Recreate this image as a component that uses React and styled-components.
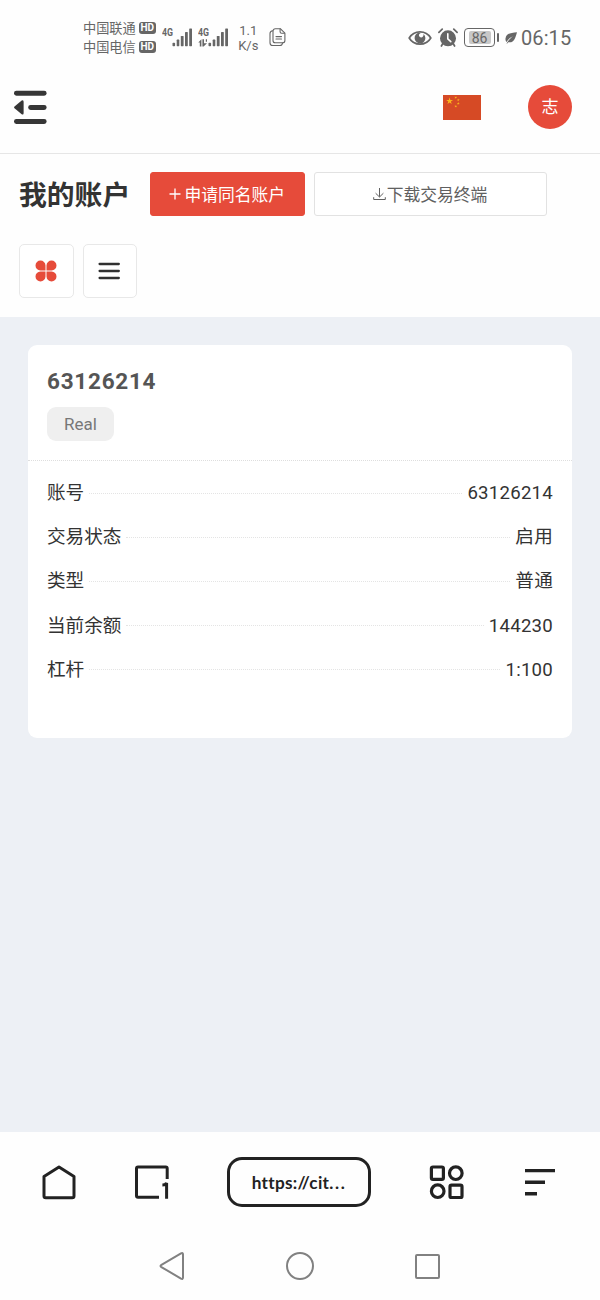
import React from "react";
import styled, { createGlobalStyle } from "styled-components";

const colors = {
  primary: "#e64b3a",
  text: "#333333",
  muted: "#606060",
  status: "#666666",
  page: "#edf0f5",
  line: "#e6e6e6",
  ink: "#222222",
};

const rows = [
  { label: "账号", value: "63126214" },
  { label: "交易状态", value: "启用" },
  { label: "类型", value: "普通" },
  { label: "当前余额", value: "144230" },
  { label: "杠杆", value: "1:100" },
];

const SignalIcon = ({ data }) => (
  <svg width="32" height="24" viewBox="0 0 32 24" fill={colors.status}>
    <text x="0" y="9.6" fontFamily="Roboto" fontSize="11" fontWeight="700" textLength="11" lengthAdjust="spacingAndGlyphs">4G</text>
    {data && <path d="M0.3 16.4L3.4 13.2V20.4H1.8V16.4ZM4.4 13.2H6V17.2H9L5.6 20.4H4.4ZM7.8 13.2h1.2v2.6h-1.2z" />}
    <rect x="10.5" y="16.8" width="2.6" height="3.4" rx="0.8" />
    <rect x="14.7" y="13.6" width="2.6" height="6.6" rx="0.6" />
    <rect x="18.8" y="10" width="2.8" height="10.2" rx="0.6" />
    <rect x="23" y="6" width="2.8" height="14.2" rx="0.6" />
    <rect x="27.2" y="2.4" width="2.8" height="17.8" rx="0.6" />
  </svg>
);

const CopyIcon = () => (
  <svg width="18" height="20" viewBox="0 0 18 20" fill="none" stroke={colors.status} strokeWidth="1.1" strokeLinejoin="round" strokeLinecap="round">
    <path d="M6.3 0.7H11.3L15.9 5.2V12.5a2.3 2.3 0 0 1-2.3 2.3H6.3A2.3 2.3 0 0 1 4 12.5V3A2.3 2.3 0 0 1 6.3 0.7Z" />
    <path d="M11.1 0.9V3.7a1.5 1.5 0 0 0 1.5 1.5h2.8M3.8 2.7C2 2.9 1 3.7 1 5.5v9.2A2.8 2.8 0 0 0 3.8 17.5h7.1c1.4 0 2.3-.8 2.6-2.4M7 8.6h5.5M7 11h5.5" />
  </svg>
);

const EyeIcon = () => (
  <svg width="24" height="18" viewBox="0 0 24 18">
    <path d="M1.2 9C6 0.8 18 0.8 22.8 9C18 17.2 6 17.2 1.2 9Z" fill="none" stroke={colors.status} strokeWidth="1.7" />
    <path d="M10.6 3.8A5.4 5.4 0 1 0 17.4 9 5.6 5.6 0 0 0 15.5 5C16 7.8 13.2 9.4 11.6 7.7 10.3 6.3 11 4.5 12.8 3.9Z" fill={colors.status} />
  </svg>
);

const AlarmIcon = () => (
  <svg width="20" height="20" viewBox="0 0 20 20">
    <circle cx="10" cy="10.3" r="8" fill={colors.status} />
    <path d="M0.9 4.3L4.2 1.2M19.1 4.3L15.8 1.2M4.7 15.8L3.4 18M15.3 15.8L16.6 18" stroke={colors.status} strokeWidth="1.7" strokeLinecap="round" />
    <path d="M9.8 5.8V10.8L12.8 13.6" fill="none" stroke="#fff" strokeWidth="1.6" strokeLinecap="round" />
  </svg>
);

const LeafIcon = () => (
  <svg width="14" height="14" viewBox="0 0 14 14">
    <path d="M13 1.2C7 1.8 2.2 2.2 1.5 7.4 1.3 9 1.8 10.3 2.5 11.1 4.2 8.2 6.3 6.6 9 5.3 6.5 7.1 4.3 9.2 2.4 12.7L3.5 12.2 4.2 11.2C10.3 12.2 11.3 7 13 1.2Z" fill={colors.status} />
  </svg>
);

const FoldIcon = () => (
  <svg width="34" height="34" viewBox="0 0 34 34" fill="#363636">
    <rect x="0" y="0.7" width="32.6" height="5" rx="2.4" />
    <rect x="14.2" y="14.9" width="18.4" height="5" rx="2.4" />
    <rect x="0" y="28.9" width="32.6" height="5" rx="2.4" />
    <path d="M0.5 16.6L7.7 10.6Q9.6 9.4 9.6 11.8V23Q9.6 25.4 7.7 24.2L0.5 18.2Q-0.3 17.4 0.5 16.6Z" />
  </svg>
);

const star = "M0-10L2.25-3.1H9.5L3.64 1.18 5.88 8.1 0 3.8-5.88 8.1-3.64 1.18-9.5-3.1H-2.25Z";

const ChinaFlag = () => (
  <svg width="38" height="26" viewBox="0 0 38 26">
    <rect width="38" height="25" y="1" fill="#d64a25" />
    <g fill="#fbb51c">
      <path d={star} transform="translate(6.6 7.2) scale(.36)" />
      <path d={star} transform="translate(12.7 3.5) rotate(25) scale(.15)" />
      <path d={star} transform="translate(15.3 5.9) rotate(10) scale(.15)" />
      <path d={star} transform="translate(15.3 9.5) scale(.15)" />
      <path d={star} transform="translate(12.7 12.3) rotate(20) scale(.15)" />
    </g>
  </svg>
);

const DownloadIcon = () => (
  <svg width="13" height="14" viewBox="0 0 13 14" fill="none" stroke={colors.muted} strokeWidth="1">
    <path d="M6.5 1V9.8M2.6 6.2L6.5 10L10.4 6.2M0.7 10.2V12.5H12.3V10.2" />
  </svg>
);

const CloverIcon = () => (
  <svg width="22" height="22" viewBox="0 0 22 22" fill={colors.primary}>
    <path d="M10.5 10.5H5.4A5 5 0 1 1 10.5 5.4ZM11.5 10.5V5.4A5 5 0 1 1 16.6 10.5ZM10.5 11.5V16.6A5 5 0 1 1 5.4 11.5ZM11.5 11.5H16.6A5 5 0 1 1 11.5 16.6Z" />
  </svg>
);

const ListIcon = () => (
  <svg width="22" height="18" viewBox="0 0 22 18" stroke="#303030" strokeWidth="2.3" strokeLinecap="round">
    <path d="M1.6 2H20.8M1.6 9H20.8M1.6 16H20.8" />
  </svg>
);

const HomeIcon = () => (
  <svg width="36" height="36" viewBox="0 0 36 36" fill="none" stroke={colors.ink} strokeWidth="3" strokeLinejoin="round">
    <path d="M18 3L33 12.6V32Q33 33.8 31.2 33.8H4.8Q3 33.8 3 32V12.6Z" />
  </svg>
);

const TabsIcon = () => (
  <svg width="36" height="36" viewBox="0 0 36 36" fill="none" stroke={colors.ink} strokeWidth="3">
    <path d="M25 33.3H4Q2.5 33.3 2.5 31.8V4.5Q2.5 3 4 3H31.7Q33.2 3 33.2 4.5V14.9M28.4 21Q31.7 21 32.6 18.9V34.8" />
  </svg>
);

const AppsIcon = () => (
  <svg width="36" height="36" viewBox="0 0 36 36" fill="none" stroke={colors.ink} strokeWidth="3.2">
    <rect x="2.4" y="3" width="12" height="12.4" rx="1.6" />
    <circle cx="26.8" cy="9.2" r="6.3" />
    <circle cx="8.7" cy="27.2" r="6.3" />
    <rect x="21" y="21.1" width="12" height="12.4" rx="1.6" />
  </svg>
);

const SortIcon = () => (
  <svg width="30" height="30" viewBox="0 0 30 30" stroke={colors.ink} strokeWidth="3.4">
    <path d="M0 3.6H30M0 15.2H20M0 26.8H12" />
  </svg>
);

const BackIcon = () => (
  <svg width="26" height="30" viewBox="0 0 26 30" fill="none" stroke="#818181" strokeWidth="2" strokeLinejoin="round">
    <path d="M2 14.2L22 2.4Q24 1.5 24 3.4V26.6Q24 28.5 22 27.6L2 15.8Q1 15 2 14.2Z" />
  </svg>
);

const App = () => {
  return (
    <Screen>
      <GlobalStyle />
      <StatusBar>
        <Carriers>
          <Carrier>中国联通<HdBadge>HD</HdBadge></Carrier>
          <Carrier>中国电信<HdBadge>HD</HdBadge></Carrier>
        </Carriers>
        <Signals>
          <SignalIcon />
          <SignalIcon data />
        </Signals>
        <Speed>
          <span>1.1</span>
          <span>K/s</span>
        </Speed>
        <CopyIcon />
        <StatusRight>
          <Alerts>
            <EyeIcon />
            <AlarmIcon />
          </Alerts>
          <Battery>
            <BatteryBody><BatteryLevel>86</BatteryLevel></BatteryBody>
            <BatteryTip />
          </Battery>
          <LeafIcon />
          <Clock>06:15</Clock>
        </StatusRight>
      </StatusBar>
      <Header>
        <FoldIcon />
        <HeaderRight>
          <ChinaFlag />
          <Avatar>志</Avatar>
        </HeaderRight>
      </Header>
      <Toolbar>
        <TitleRow>
          <Title>我的账户</Title>
          <Button $primary $width="155px">
            <svg width="12" height="12" viewBox="0 0 12 12" stroke="#fff" strokeWidth="1.3"><path d="M6 0.5V11.5M0.5 6H11.5" /></svg>
            申请同名账户
          </Button>
          <Button $width="233px">
            <DownloadIcon />
            下载交易终端
          </Button>
        </TitleRow>
        <ViewSwitch>
          <ViewButton><CloverIcon /></ViewButton>
          <ViewButton><ListIcon /></ViewButton>
        </ViewSwitch>
      </Toolbar>
      <Content>
        <Card>
          <CardHead>
            <AccountNumber>63126214</AccountNumber>
            <Tag>Real</Tag>
          </CardHead>
          <CardBody>
            {rows.map((row) => (
              <Row key={row.label}>
                <span>{row.label}</span>
                <Leader />
                <Value>{row.value}</Value>
              </Row>
            ))}
          </CardBody>
        </Card>
      </Content>
      <BrowserBar>
        <HomeIcon />
        <TabsIcon />
        <Address>https://cit<Dots>...</Dots></Address>
        <AppsIcon />
        <SortIcon />
      </BrowserBar>
      <SystemNav>
        <BackIcon />
        <NavCircle />
        <NavSquare />
      </SystemNav>
    </Screen>
  );
};

const GlobalStyle = createGlobalStyle`
  * {
    box-sizing: border-box;
  }
  body {
    margin: 0;
    background: #fff;
  }
  svg {
    display: block;
    flex-shrink: 0;
  }
`;

const Screen = styled.div`
  width: 600px;
  height: 1300px;
  display: flex;
  flex-direction: column;
  overflow: hidden;
  background: #fefefe;
  color: ${colors.text};
  font-family: Roboto, "Noto Sans CJK SC", sans-serif;
`;

const StatusBar = styled.div`
  height: 75px;
  flex-shrink: 0;
  display: flex;
  align-items: center;
  padding: 0 28px 0 83px;
  color: ${colors.status};
`;

const Carriers = styled.div`
  display: flex;
  flex-direction: column;
`;

const Carrier = styled.div`
  display: flex;
  align-items: center;
  gap: 3px;
  height: 19px;
  font-size: 13.2px;
  line-height: 19px;
`;

const HdBadge = styled.span`
  width: 17px;
  height: 12px;
  border-radius: 3px;
  background: ${colors.status};
  color: #fff;
  font-size: 10px;
  font-weight: 700;
  line-height: 12px;
  text-align: center;
`;

const Signals = styled.div`
  display: flex;
  gap: 4px;
  margin: 0 7px 0 6px;
`;

const Speed = styled.div`
  width: 24px;
  margin-right: 8px;
  padding-right: 1px;
  display: flex;
  flex-direction: column;
  align-items: center;
  font-size: 13px;
  line-height: 15px;
`;

const StatusRight = styled.div`
  margin-left: auto;
  display: flex;
  align-items: center;
`;

const Alerts = styled.div`
  display: flex;
  align-items: center;
  gap: 6px;
`;

const Battery = styled.div`
  display: flex;
  align-items: center;
  gap: 2px;
  margin: 0 5px 0 6px;
`;

const BatteryBody = styled.div`
  width: 31px;
  height: 19px;
  padding: 2px;
  border: 1.5px solid ${colors.status};
  border-radius: 4px;
`;

const BatteryLevel = styled.div`
  width: 22px;
  height: 13px;
  margin: 0 auto;
  border-radius: 2px;
  background: #c8c8c8;
  font-size: 14px;
  line-height: 14px;
  text-align: center;
`;

const BatteryTip = styled.div`
  width: 2px;
  height: 9px;
  border-radius: 1px;
  background: ${colors.status};
`;

const Clock = styled.div`
  width: 51px;
  margin-left: 3px;
  font-size: 20px;
  line-height: 24px;
  letter-spacing: 0.1px;
`;

const Header = styled.div`
  height: 79px;
  flex-shrink: 0;
  display: flex;
  align-items: center;
  justify-content: space-between;
  padding: 0 28px 14px 14px;
  border-bottom: 1px solid ${colors.line};
`;

const HeaderRight = styled.div`
  display: flex;
  align-items: center;
  gap: 47px;
`;

const Avatar = styled.div`
  width: 44px;
  height: 44px;
  border-radius: 50%;
  background: ${colors.primary};
  color: #fff;
  font-size: 17px;
  line-height: 44px;
  text-align: center;
`;

const Toolbar = styled.div`
  height: 163px;
  flex-shrink: 0;
  padding: 18px 19px 0;
`;

const TitleRow = styled.div`
  display: flex;
  align-items: center;
  height: 44px;
`;

const Title = styled.h1`
  width: 131px;
  margin: 0;
  padding-top: 4px;
  font-size: 27.8px;
  font-weight: 700;
  line-height: 42px;
  white-space: nowrap;
`;

const Button = styled.button`
  width: ${(props) => props.$width};
  height: 44px;
  display: flex;
  align-items: center;
  justify-content: center;
  gap: ${(props) => (props.$primary ? "3.5px" : "1px")};
  padding: 0 1px 1px 0;
  border: 1px solid ${(props) => (props.$primary ? colors.primary : "#e2e2e2")};
  border-radius: 3px;
  background: ${(props) => (props.$primary ? colors.primary : "#fff")};
  color: ${(props) => (props.$primary ? "#fff" : colors.muted)};
  font-family: inherit;
  font-size: 16.8px;
  white-space: nowrap;
  & + & {
    margin-left: 9px;
  }
`;

const ViewSwitch = styled.div`
  display: flex;
  gap: 9px;
  margin-top: 28px;
`;

const ViewButton = styled.button`
  width: 54.5px;
  height: 54px;
  display: flex;
  align-items: center;
  justify-content: center;
  padding: 0 1px 0 0;
  border: 1px solid #e8e8e8;
  border-radius: 5px;
  background: #fff;
`;

const Content = styled.div`
  height: 815px;
  flex-shrink: 0;
  padding: 28px;
  background: ${colors.page};
`;

const Card = styled.div`
  height: 393px;
  border-radius: 9px;
  background: #fff;
`;

const CardHead = styled.div`
  height: 116px;
  padding: 23px 19px 0;
  border-bottom: 1px dotted #dedede;
`;

const AccountNumber = styled.div`
  margin-bottom: 12px;
  color: #555;
  font-size: 22.5px;
  font-weight: 700;
  line-height: 27px;
  letter-spacing: 0.75px;
`;

const Tag = styled.span`
  display: block;
  width: 67px;
  height: 34px;
  border-radius: 9px;
  background: #efefef;
  color: #777;
  font-size: 17px;
  line-height: 34px;
  text-align: center;
`;

const CardBody = styled.div`
  padding: 10.2px 19px 0;
`;

const Row = styled.div`
  height: 44.1px;
  display: flex;
  align-items: center;
  font-size: 18.6px;
  line-height: 24px;
`;

const Leader = styled.div`
  flex: 1;
  margin: 0 5px;
  border-top: 1px dotted #e4e4e4;
`;

const Value = styled.span`
  letter-spacing: 0.25px;
`;

const BrowserBar = styled.div`
  height: 100px;
  flex-shrink: 0;
  display: grid;
  grid-template-columns: 93px 93px 202px 96px 30px;
  align-items: center;
  padding-left: 41px;
`;

const Address = styled.div`
  width: 144px;
  height: 50px;
  border: 3px solid ${colors.ink};
  border-radius: 15px;
  color: ${colors.ink};
  font-family: Lato, sans-serif;
  font-size: 17.2px;
  font-weight: 700;
  font-variant-ligatures: none;
  letter-spacing: 0.3px;
  line-height: 46px;
  text-align: center;
`;

const Dots = styled.span`
  letter-spacing: 1.6px;
`;

const SystemNav = styled.div`
  height: 68px;
  flex-shrink: 0;
  display: flex;
  align-items: center;
  justify-content: space-between;
  padding: 0 160px 0 159px;
`;

const NavCircle = styled.div`
  width: 28px;
  height: 28px;
  border: 2px solid #818181;
  border-radius: 50%;
`;

const NavSquare = styled.div`
  width: 25px;
  height: 25px;
  border: 2px solid #818181;
  border-radius: 2px;
`;

export default App;
